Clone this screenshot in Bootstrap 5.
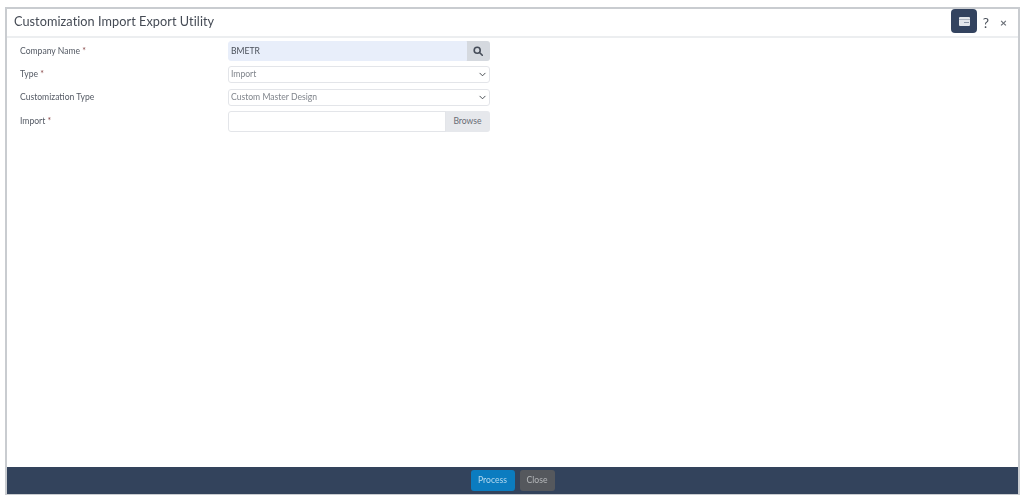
<!DOCTYPE html>
<html lang="en">
<head>
<meta charset="utf-8">
<title>Customization Import Export Utility</title>
<link href="https://cdn.jsdelivr.net/npm/bootstrap@5.3.0/dist/css/bootstrap.min.css" rel="stylesheet">
<style>
html, body { height: 500px; overflow: hidden; background: #fff; }
body { font-family: "Lato", "Liberation Sans", sans-serif; color: #3c4350; padding: 7px 4px 5px 5px; }
.shell { height: 488px; border: 1px solid #c9ccd0; border-top-width: 2px; border-left-width: 2px; border-right-width: 2px; filter: blur(.5px); }
.shell-head { height: 29px; padding: 0 6px 0 7px; border-bottom: 2px solid #eceef0; }
.shell-title { font-size: 12.7px; letter-spacing: .06px; color: #454b55; margin: 0 0 1px; font-weight: 400; }
.tool-btn { width: 26px; height: 24px; background: #33435f; border: 0; border-radius: 4px; padding: 0; margin-bottom: 3px; }
.tool-help { font-size: 14px; color: #4b515b; width: 18px; text-align: center; }
.tool-close { font-size: 12px; color: #6b7078; width: 17px; text-align: center; font-weight: 700; }
.shell-body { padding: 3px 0 0 13px; }
.form-line { width: 470px; margin-bottom: 6px; }
.form-line label { width: 208px; flex: none; font-size: 8.6px; color: #555b65; }
.req { color: #8a4a4a; }
.form-line .form-control, .form-line .form-select { font-size: 8.6px; color: #80858c; border-color: #e3e5e9; border-radius: 3px; padding: 0 2px; height: 17px; min-height: 0; box-shadow: none; line-height: 1; }
.form-line .form-select { background-size: 9px 7px; background-position: right 2px center; }
.tall .form-control { height: 21px; }
.tall.input-group { flex: 1; }
.filled.form-control, .form-line .filled.form-control { background: #e8eefa; border-color: #e8eefa; color: #4a505a; height: 20px; }
.find-btn { width: 24px; height: 20px; background: #d5d9df; border: 0; padding: 0; border-radius: 0 3px 3px 0; display: flex; align-items: center; justify-content: center; }
.browse-btn { width: 45px; height: 21px; background: #e6e8ec; border: 0; padding: 0; font-size: 8.6px; color: #666c75; border-radius: 0 3px 3px 0; }
.gap-a { margin-bottom: 5px; }
.gap-b { margin-bottom: 5px; }
.shell-foot { height: 27px; background: #33435c; gap: 5px; }
.act { height: 21px; font-size: 8.6px; border: 0; border-radius: 3px; padding: 0; }
.act-go { width: 44px; background: #0b7cc0; color: #b4d8ee; }
.act-no { width: 35px; background: #55585d; color: #b5b7ba; }
</style>
</head>
<body>
<div class="shell d-flex flex-column">
  <div class="shell-head d-flex align-items-center justify-content-between flex-shrink-0">
    <h1 class="shell-title">Customization Import Export Utility</h1>
    <div class="d-flex align-items-center">
      <button class="tool-btn d-flex align-items-center justify-content-center" aria-label="Menu">
        <svg width="11" height="9" viewBox="0 0 11 9"><rect width="11" height="9" rx="1" fill="#e4e7ec"/><rect x="5" y="5" width="5" height="1" fill="#8d97a8"/><rect x="0" y="2" width="11" height="1" fill="#aeb5c1"/></svg>
      </button>
      <span class="tool-help">?</span>
      <span class="tool-close">×</span>
    </div>
  </div>
  <div class="shell-body flex-grow-1">
    <div class="form-line d-flex align-items-center gap-a">
      <label>Company Name <span class="req">*</span></label>
      <div class="input-group flex-grow-1">
        <input class="form-control filled" value="BMETR">
        <button class="find-btn" aria-label="Search">
          <svg width="10" height="10" viewBox="0 0 10 10" fill="none" stroke="#454c58" stroke-width="1.6"><circle cx="4.2" cy="4.2" r="3"/><path d="M6.5 6.5 9.3 9.3" stroke-linecap="round"/></svg>
        </button>
      </div>
    </div>
    <div class="form-line d-flex align-items-center">
      <label>Type <span class="req">*</span></label>
      <select class="form-select"><option>Import</option></select>
    </div>
    <div class="form-line d-flex align-items-center gap-b">
      <label>Customization Type</label>
      <select class="form-select"><option>Custom Master Design</option></select>
    </div>
    <div class="form-line d-flex align-items-center">
      <label>Import <span class="req">*</span></label>
      <div class="input-group tall">
        <input class="form-control">
        <button class="browse-btn">Browse</button>
      </div>
    </div>
  </div>
  <div class="shell-foot d-flex align-items-center justify-content-center flex-shrink-0">
    <button class="act act-go">Process</button>
    <button class="act act-no">Close</button>
  </div>
</div>
<script src="https://cdn.jsdelivr.net/npm/bootstrap@5.3.0/dist/js/bootstrap.bundle.min.js"></script>
</body>
</html>
